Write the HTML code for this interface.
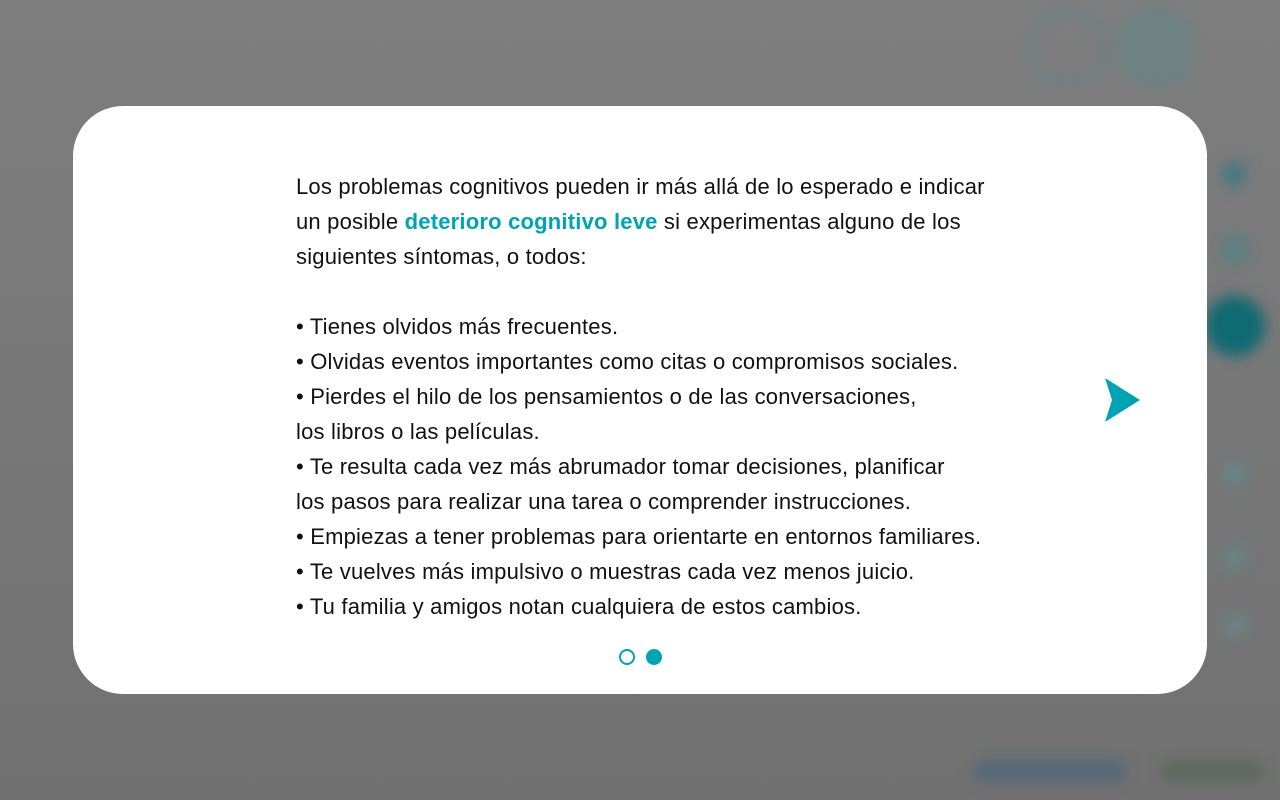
<!DOCTYPE html>
<html><head><meta charset="utf-8"><style>
html,body{margin:0;padding:0;width:1280px;height:800px;overflow:hidden;background:#777;font-family:"Liberation Sans",Arial,sans-serif}
.bg{position:absolute;inset:0;background:linear-gradient(180deg,#7e7e7e 0%,#797979 40%,#717171 100%)}
.blob{position:absolute;border-radius:50%;filter:blur(7px)}
.card{position:absolute;left:73px;top:106px;width:1134px;height:588px;background:#fff;border-radius:50px}
.txt{position:absolute;left:296px;top:169px;font-size:22px;line-height:35px;color:#111;letter-spacing:0.2px;white-space:nowrap}
.txt b{color:#00a3b4}
.dot{position:absolute;border-radius:50%;box-sizing:border-box}
</style></head><body>
<div class="bg"></div>
<div class="blob" style="left:1030px;top:10px;width:70px;height:70px;border:3px solid #5a8285"></div>
<div class="blob" style="left:1118px;top:10px;width:70px;height:70px;border:3px solid #5a8285;background:#6f8283"></div>
<div class="blob" style="left:1222px;top:162px;width:24px;height:24px;background:#3e7a80"></div>
<div class="blob" style="left:1220px;top:235px;width:30px;height:30px;background:#5d8184"></div>
<div class="blob" style="left:1205px;top:296px;width:60px;height:60px;background:#0f6a72"></div>
<div class="blob" style="left:1222px;top:462px;width:26px;height:26px;background:#6a8486"></div>
<div class="blob" style="left:1222px;top:545px;width:26px;height:26px;background:#6a8486"></div>
<div class="blob" style="left:1222px;top:612px;width:26px;height:26px;background:#6c8385"></div>
<div class="blob" style="left:975px;top:762px;width:150px;height:18px;border-radius:4px;background:#50677a"></div>
<div class="blob" style="left:1162px;top:762px;width:100px;height:18px;border-radius:4px;background:#5c675c"></div>
<div class="card"></div>
<div class="txt">Los problemas cognitivos pueden ir más allá de lo esperado e indicar<br>un posible <b>deterioro cognitivo leve</b> si experimentas alguno de los<br>siguientes síntomas, o todos:<br><br>• Tienes olvidos más frecuentes.<br>• Olvidas eventos importantes como citas o compromisos sociales.<br>• Pierdes el hilo de los pensamientos o de las conversaciones,<br>los libros o las películas.<br>• Te resulta cada vez más abrumador tomar decisiones, planificar<br>los pasos para realizar una tarea o comprender instrucciones.<br>• Empiezas a tener problemas para orientarte en entornos familiares.<br>• Te vuelves más impulsivo o muestras cada vez menos juicio.<br>• Tu familia y amigos notan cualquiera de estos cambios.</div>
<svg style="position:absolute;left:1100px;top:376px" width="46" height="50"><path d="M5 2 L40 24 L5 46 L12 24 Z" fill="#00a3b4"/></svg>
<div class="dot" style="left:619px;top:649px;width:16px;height:16px;border:2px solid #00a3b4"></div>
<div class="dot" style="left:646px;top:649px;width:16px;height:16px;background:#00a3b4"></div>
</body></html>
